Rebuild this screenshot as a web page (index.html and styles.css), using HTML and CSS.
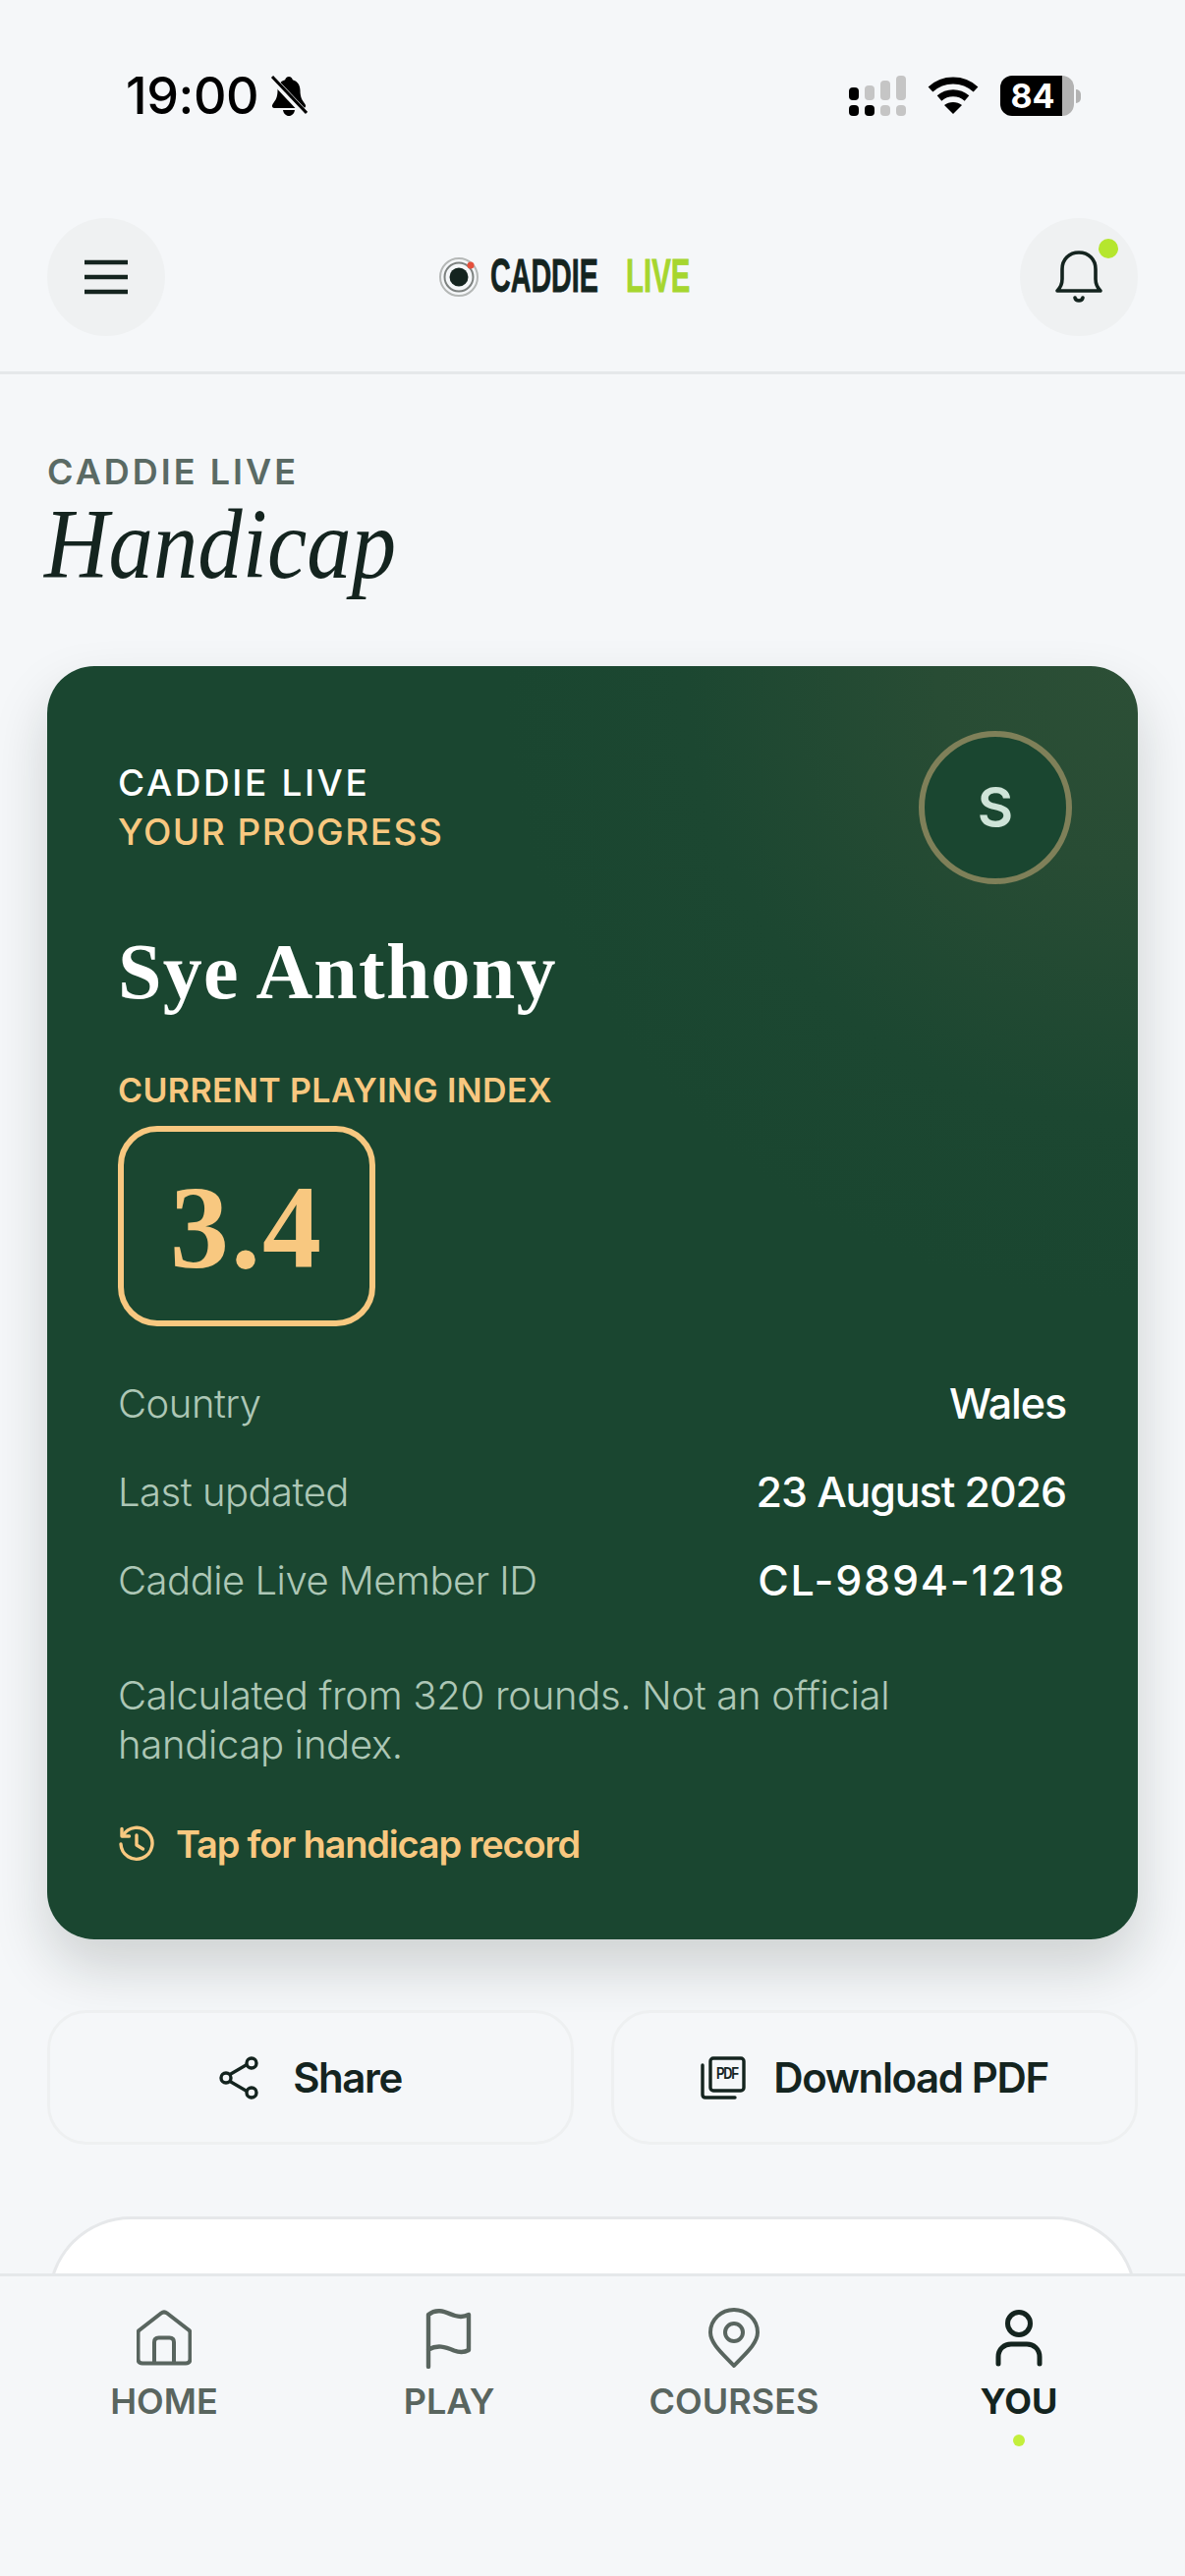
FILE: index.html
```html
<!DOCTYPE html>
<html lang="en">
<head>
    <meta charset="UTF-8">
    <meta name="viewport" content="width=device-width, initial-scale=1.0">
    <title>Caddie Live Handicap</title>
    <link rel="stylesheet" href="styles.css">
</head>
<body>
    <!-- Status bar -->
    <div class="status-bar">
        <div class="status-left">
            <span class="status-time">19:00</span>
            <svg class="muted-bell" viewBox="0 0 38 42" width="38" height="42">
                <path d="M19 1c2 0 3.500 1.500 3.800 3.200C28 5.500 30.500 10 30.500 15c0 7 2 10 5 14 1.200 2 .5 4-2 4H4.500c-2.500 0-3.200-2-2-4 3-4 5-7 5-14 0-5 2.500-9.500 7.700-10.800C15.500 2.500 17 1 19 1z" fill="#000"/>
                <path d="M13 35h12c-.5 3.500-3 6-6 6s-5.500-2.500-6-6z" fill="#000"/>
                <path d="M1 2l35 37" stroke="#f5f7f9" stroke-width="7"/>
                <path d="M2 1l35 37" stroke="#000" stroke-width="3"/>
            </svg>
        </div>
        <div class="status-right">
            <div class="signal">
                <span class="sig sig-1 on"></span><span class="sig sig-2"></span><span class="sig sig-3"></span><span class="sig sig-4"></span>
                <span class="sig-dot on"></span><span class="sig-dot on"></span><span class="sig-dot"></span><span class="sig-dot"></span>
            </div>
            <svg class="wifi" viewBox="0 0 52 40" width="52" height="40">
                <path d="M3 14C16 2 36 2 49 14" fill="none" stroke="#000" stroke-width="7"/>
                <path d="M12 23c8-7 20-7 28 0" fill="none" stroke="#000" stroke-width="7"/>
                <path d="M17 30c5-4 13-4 18 0l-9 9z" fill="#000"/>
            </svg>
            <div class="battery">
                <div class="battery-body">
                    <span class="battery-level">84</span>
                    <span class="battery-rest"></span>
                </div>
                <span class="battery-nib"></span>
            </div>
        </div>
    </div>

    <!-- Header -->
    <header class="app-header">
        <button class="round-btn">
            <svg viewBox="0 0 44 36" width="44" height="36">
                <path d="M0 3h44M0 18h44M0 33h44" stroke="#14241f" stroke-width="4.500" fill="none"/>
            </svg>
        </button>
        <div class="logo">
            <svg class="logo-mark" viewBox="0 0 42 42" width="42" height="42">
                <circle cx="21" cy="21" r="19" fill="none" stroke="#b5b8b7" stroke-width="2"/>
                <circle cx="21" cy="21" r="14.500" fill="none" stroke="#7d8280" stroke-width="2"/>
                <circle cx="21" cy="21" r="9.500" fill="#14241f"/>
                <circle cx="33" cy="9" r="3.500" fill="#e5503c"/>
            </svg>
            <span class="logo-word logo-caddie">CADDIE</span>
            <span class="logo-word logo-live">LIVE</span>
        </div>
        <button class="round-btn">
            <svg viewBox="0 0 50 54" width="50" height="54">
                <path d="M3 41c3-3 5-6 5-12V19C8 9 15 2 25 2s17 7 17 17v10c0 6 2 9 5 12z" fill="none" stroke="#14241f" stroke-width="3.600" stroke-linejoin="round"/>
                <path d="M21 48c1 4 7 4 8 0" fill="none" stroke="#14241f" stroke-width="3.600" stroke-linecap="round"/>
            </svg>
            <span class="notify-dot"></span>
        </button>
    </header>

    <main class="content">
        <div class="page-eyebrow">CADDIE LIVE</div>
        <h1 class="page-title">Handicap</h1>

        <!-- Handicap card -->
        <section class="handicap-card">
            <div class="card-top">
                <div class="card-heading">
                    <div class="card-brand">CADDIE LIVE</div>
                    <div class="card-sub">YOUR PROGRESS</div>
                </div>
                <div class="avatar">S</div>
            </div>
            <h2 class="player-name">Sye Anthony</h2>
            <div class="index-label">CURRENT PLAYING INDEX</div>
            <div class="index-box">3.4</div>
            <div class="info-rows">
                <div class="info-row"><span class="info-label">Country</span><span class="info-value">Wales</span></div>
                <div class="info-row"><span class="info-label">Last updated</span><span class="info-value">23 August 2026</span></div>
                <div class="info-row"><span class="info-label">Caddie Live Member ID</span><span class="info-value info-id">CL-9894-1218</span></div>
            </div>
            <p class="card-note">Calculated from 320 rounds. Not an official handicap index.</p>
            <div class="record-link">
                <svg viewBox="0 0 38 38" width="38" height="38">
                    <path d="M5 10.500A16 16 0 1 1 3 19" fill="none" stroke="#f8c880" stroke-width="3.400" stroke-linecap="round"/>
                    <path d="M4 3.500v7.500h7.500" fill="none" stroke="#f8c880" stroke-width="3.400" stroke-linecap="round" stroke-linejoin="round"/>
                    <path d="M19 10v10l6.500 4" fill="none" stroke="#f8c880" stroke-width="3.400" stroke-linecap="round" stroke-linejoin="round"/>
                </svg>
                <span>Tap for handicap record</span>
            </div>
        </section>

        <!-- Actions -->
        <div class="actions">
            <button class="action-btn share-btn">
                <svg viewBox="0 0 40 44" width="40" height="44">
                    <path d="M11 18.500L29 8M11 25.500L29 36" stroke="#14241f" stroke-width="3.200" fill="none"/>
                    <circle cx="33" cy="7" r="5" fill="none" stroke="#14241f" stroke-width="3.400"/>
                    <circle cx="7" cy="22" r="5" fill="none" stroke="#14241f" stroke-width="3.400"/>
                    <circle cx="33" cy="37" r="5" fill="none" stroke="#14241f" stroke-width="3.400"/>
                </svg>
                <span>Share</span>
            </button>
            <button class="action-btn">
                <svg viewBox="0 0 46 44" width="46" height="44">
                    <rect x="10" y="2" width="34" height="33" rx="3" fill="none" stroke="#14241f" stroke-width="3.400"/>
                    <path d="M2 9v30c0 2 1 3 3 3h30" fill="none" stroke="#14241f" stroke-width="3.400" stroke-linecap="round"/>
                    <text x="27" y="23" text-anchor="middle" textLength="22" lengthAdjust="spacingAndGlyphs" class="pdf-mark">PDF</text>
                </svg>
                <span>Download PDF</span>
            </button>
        </div>

        <div class="next-card"></div>
    </main>

    <!-- Bottom nav -->
    <nav class="bottom-nav">
        <div class="nav-item">
            <svg viewBox="0 0 56 60" width="56" height="60">
                <path d="M2.500 21L25 3.500c2-1.500 4-1.500 6 0L53.500 21c.7.7 1 1.500 1 2.500V50c0 3-1.500 4.500-4.500 4.500H6c-3 0-4.500-1.500-4.500-4.500V23.500c0-1 .3-1.800 1-2.500z" transform="translate(0 1)" fill="none" stroke="#59655f" stroke-width="4"/>
                <path d="M18 55V34c0-3 1.500-4.500 4.500-4.500h11c3 0 4.500 1.500 4.500 4.500v21" fill="none" stroke="#59655f" stroke-width="4"/>
            </svg>
            <span>HOME</span>
        </div>
        <div class="nav-item">
            <svg viewBox="0 0 56 62" width="56" height="62">
                <path d="M7 60V7c10-8 20-1 27 1 5 1.500 10 1 14-1v36c-5 3-10 2.500-15 .5-9-4-17-6-26-1" fill="none" stroke="#59655f" stroke-width="4.400" stroke-linecap="round" stroke-linejoin="round"/>
            </svg>
            <span>PLAY</span>
        </div>
        <div class="nav-item">
            <svg viewBox="0 0 56 62" width="56" height="62">
                <path d="M28 59C18 48 4 37 4 25 4 12 15 2 28 2s24 10 24 23c0 12-14 23-24 34z" fill="none" stroke="#59655f" stroke-width="4" stroke-linejoin="round"/>
                <circle cx="28" cy="25" r="9" fill="none" stroke="#59655f" stroke-width="4"/>
            </svg>
            <span>COURSES</span>
        </div>
        <div class="nav-item nav-active">
            <svg viewBox="0 0 56 62" width="56" height="62">
                <circle cx="28" cy="16" r="11.500" fill="none" stroke="#14241f" stroke-width="5"/>
                <path d="M7 57V50c0-8 6-13 13-13h16c7 0 13 5 13 13v7" fill="none" stroke="#14241f" stroke-width="5" stroke-linecap="round"/>
            </svg>
            <span>YOU</span>
            <i class="nav-dot"></i>
        </div>
    </nav>
</body>
</html>
```

FILE: styles.css
```css
* {
    box-sizing: border-box;
}
body {
    margin: 0;
    width: 1206px;
    height: 2622px;
    overflow: hidden;
    display: flex;
    flex-direction: column;
    background-color: #f5f7f9;
    color: #14241f;
    font-family: Inter, "Noto Sans", sans-serif;
}

/* Status bar */
.status-bar {
    height: 200px;
    flex-shrink: 0;
    display: flex;
    justify-content: space-between;
    padding: 77px 106px 0 128px;
    color: #000;
}
.status-left {
    display: flex;
    align-items: flex-start;
    gap: 12px;
    height: 42px;
}
.status-time {
    font-size: 52px;
    font-weight: 500;
    line-height: 42px;
    letter-spacing: -0.4px;
}
.status-right {
    display: flex;
    align-items: flex-start;
    height: 42px;
}
.signal {
    display: grid;
    grid-template-columns: repeat(4, 10px);
    grid-template-rows: 25px 11px;
    column-gap: 6px;
    row-gap: 5px;
    margin-right: 22px;
}
.sig {
    align-self: end;
    border-radius: 4px;
    background-color: #c5c5c5;
}
.sig-1 { height: 13px; }
.sig-2 { height: 15px; }
.sig-3 { height: 20px; }
.sig-4 { height: 25px; }
.sig-dot {
    border-radius: 4px;
    background-color: #c5c5c5;
}
.sig.on, .sig-dot.on {
    background-color: #000;
}
.wifi {
    margin-right: 22px;
}
.battery {
    display: flex;
    align-items: center;
    gap: 2px;
}
.battery-body {
    display: flex;
    width: 75px;
    height: 41px;
    border-radius: 12px;
    overflow: hidden;
}
.battery-level {
    width: 63px;
    background-color: #000;
    color: #fff;
    font-size: 34px;
    font-weight: 700;
    line-height: 41px;
    text-align: center;
    padding-left: 3px;
}
.battery-rest {
    flex: 1;
    background-color: #b3b3b3;
}
.battery-nib {
    width: 5px;
    height: 14px;
    border-radius: 0 5px 5px 0;
    background-color: #b3b3b3;
}

/* Header */
.app-header {
    height: 181px;
    flex-shrink: 0;
    display: flex;
    justify-content: space-between;
    padding: 22px 48px 0;
    border-bottom: 3px solid #e5e8ea;
}
.round-btn {
    position: relative;
    width: 120px;
    height: 120px;
    padding: 0;
    border: none;
    border-radius: 50%;
    background-color: #eff1f2;
    display: flex;
    align-items: center;
    justify-content: center;
}
.notify-dot {
    position: absolute;
    top: 21px;
    right: 20px;
    width: 20px;
    height: 20px;
    border-radius: 50%;
    background-color: #b5e62e;
}
.logo {
    display: flex;
    align-items: center;
    width: 255px;
    height: 120px;
    margin-right: 60px;
}
.logo-mark {
    flex-shrink: 0;
    margin-right: 11px;
}
.logo-word {
    display: block;
    flex-shrink: 0;
    margin-bottom: 5px;
    font-family: "Liberation Sans", sans-serif;
    font-weight: 700;
    font-size: 49px;
    color: #14241f;
    -webkit-text-stroke: 0.8px currentColor;
    transform-origin: left center;
}
/* no condensed face installed, so the wordmark is squeezed */
.logo-caddie {
    width: 138px;
    transform: scaleX(0.585);
}
.logo-live {
    width: 62px;
    color: #a6d62f;
    transform: scaleX(0.6);
}

/* Page */
.content {
    flex: 1;
    min-height: 0;
    overflow: hidden;
    padding: 0 48px;
}
.page-eyebrow {
    margin-top: 78px;
    font-size: 36px;
    font-weight: 600;
    line-height: 42px;
    letter-spacing: 3px;
    color: #5a6a64;
}
.page-title {
    margin: 7px 0 0 -3px;
    font-family: "Liberation Serif", serif;
    font-style: italic;
    font-weight: 400;
    font-size: 102px;
    line-height: 92px;
    color: #14241f;
    transform: scaleX(0.89);
    transform-origin: left center;
}

/* Card */
.handicap-card {
    margin-top: 78px;
    height: 1296px;
    padding: 66px 72px 0;
    border-radius: 48px;
    background: radial-gradient(circle at 100% 0%, #2c4f36 0%, #284c34 12%, #1c4731 27%, #1a4630 38%);
    box-shadow: 0 28px 56px rgba(20, 30, 25, 0.17);
}
.card-top {
    display: flex;
    justify-content: space-between;
    align-items: flex-start;
}
.card-heading {
    padding-top: 28px;
}
.card-brand {
    font-size: 37px;
    font-weight: 500;
    line-height: 50px;
    letter-spacing: 2.6px;
    color: #fff;
}
.card-sub {
    font-size: 37px;
    font-weight: 500;
    line-height: 50px;
    letter-spacing: 1.5px;
    color: #f8c880;
}
.avatar {
    width: 156px;
    height: 156px;
    flex-shrink: 0;
    margin-right: -5px;
    border: 6px solid #7f8059;
    border-radius: 50%;
    background-color: #1a4630;
    color: #cfe4d8;
    font-size: 56px;
    font-weight: 600;
    line-height: 144px;
    text-align: center;
}
.player-name {
    margin: 39px 0 0;
    font-family: "Liberation Serif", serif;
    font-weight: 700;
    font-size: 80px;
    line-height: 100px;
    letter-spacing: 1.2px;
    color: #fff;
}
.index-label {
    margin-top: 51px;
    font-size: 34px;
    font-weight: 600;
    line-height: 40px;
    letter-spacing: 0.4px;
    color: #f8c880;
}
.index-box {
    width: 262px;
    height: 204px;
    margin-top: 16px;
    border: 6px solid #f8c880;
    border-radius: 40px;
    font-family: "Liberation Serif", serif;
    font-weight: 700;
    font-size: 120px;
    line-height: 196px;
    letter-spacing: 2px;
    text-align: center;
    color: #f8c880;
}
.info-rows {
    margin-top: 33px;
}
.info-row {
    display: flex;
    justify-content: space-between;
    align-items: center;
    height: 90px;
    padding-right: 1px;
}
.info-label {
    font-size: 40px;
    font-weight: 300;
    letter-spacing: -0.5px;
    color: #adc7b6;
}
.info-value {
    font-size: 43px;
    font-weight: 500;
    letter-spacing: -1.1px;
    color: #fff;
}
.info-id {
    letter-spacing: 1.8px;
}
.card-note {
    margin: 48px 0 0;
    font-size: 40px;
    font-weight: 300;
    line-height: 50px;
    letter-spacing: -0.3px;
    color: #adc7b6;
    max-width: 840px;
}
.record-link {
    display: flex;
    align-items: center;
    gap: 21px;
    margin-top: 53px;
    font-size: 38px;
    font-weight: 600;
    letter-spacing: -1.2px;
    color: #f8c880;
}

/* Action buttons */
.actions {
    display: flex;
    gap: 38px;
    margin-top: 72px;
}
.action-btn {
    flex: 1;
    height: 137px;
    display: flex;
    align-items: center;
    justify-content: center;
    gap: 28px;
    padding: 0;
    border: 3px solid #eef0f1;
    border-radius: 40px;
    background-color: #f5f7f9;
    font-family: Inter, sans-serif;
    font-size: 42px;
    font-weight: 600;
    letter-spacing: -1.4px;
    color: #14241f;
}
.share-btn {
    gap: 35px;
}
.pdf-mark {
    font-family: "Liberation Sans", sans-serif;
    font-size: 16px;
    font-weight: 700;
    fill: #14241f;
}
.next-card {
    height: 200px;
    margin: 73px 1px 0;
    border: 3px solid #e6e8ea;
    border-radius: 84px;
    background-color: #fff;
}

/* Bottom nav */
.bottom-nav {
    height: 308px;
    flex-shrink: 0;
    display: grid;
    grid-template-columns: repeat(4, 290px);
    padding: 32px 22px 0;
    border-top: 3px solid #e5e8ea;
    background-color: #f5f7f9;
}
.nav-item {
    display: flex;
    flex-direction: column;
    align-items: center;
    height: 150px;
    font-size: 36px;
    font-weight: 600;
    line-height: 44px;
    color: #59655f;
}
.nav-item svg {
    height: 62px;
    margin-bottom: 11px;
}
.nav-active {
    font-weight: 700;
    color: #14241f;
}
.nav-dot {
    width: 12px;
    height: 12px;
    margin-top: 12px;
    border-radius: 50%;
    background-color: #c3ef3c;
}
```
